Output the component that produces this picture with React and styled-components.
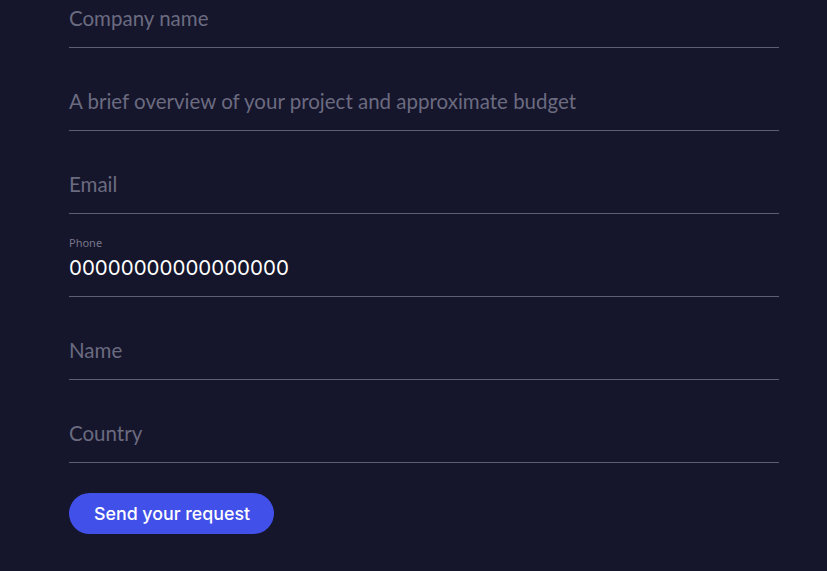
import React from "react";
import styled, { createGlobalStyle } from "styled-components";

const Global = createGlobalStyle`
  html, body { margin: 0; padding: 0; background: #15152b; }
  body { overflow: hidden; }
  * { box-sizing: border-box; }
`;

const Page = styled.div`
  width: 827px;
  height: 571px;
  background: #15152b;
  overflow: hidden;
`;

const Form = styled.form`
  display: flex;
  flex-direction: column;
  width: 710px;
  margin: -35px 0 0 69px;
`;

const Field = styled.div`
  display: flex;
  flex-direction: column;
  justify-content: flex-end;
  height: 83px;
  border-bottom: 1px solid #5e5e74;
  padding-bottom: 12px;
`;

const Label = styled.label`
  font-family: "Noto Sans", sans-serif;
  font-size: 11px;
  line-height: 14px;
  color: #77778a;
`;

const Input = styled.input`
  height: 34px;
  border: none;
  outline: none;
  background: transparent;
  padding: 0;
  color: #ffffff;
  font-family: ${(p) => (p.$filled ? '"Inter", sans-serif' : '"Lato", sans-serif')};
  font-size: 20.5px;
  &::placeholder {
    color: #6b6b80;
    font-family: "Lato", sans-serif;
  }
`;

const Button = styled.button`
  align-self: flex-start;
  margin-top: 30px;
  height: 41px;
  padding: 0 24px 0 25px;
  border: none;
  border-radius: 21px;
  background: #4150e8;
  color: #ffffff;
  font-family: "Inter", sans-serif;
  font-weight: 500;
  font-size: 17.8px;
  cursor: pointer;
`;

const fields = [
  { name: "company", placeholder: "Company name" },
  { name: "overview", placeholder: "A brief overview of your project and approximate budget" },
  { name: "email", placeholder: "Email" },
  { name: "phone", label: "Phone", value: "00000000000000000" },
  { name: "name", placeholder: "Name" },
  { name: "country", placeholder: "Country" },
];

export default function App() {
  return (
    <Page>
      <Global />
      <Form onSubmit={(e) => e.preventDefault()}>
        {fields.map((f) => (
          <Field key={f.name}>
            {f.label && <Label htmlFor={f.name}>{f.label}</Label>}
            <Input
              id={f.name}
              placeholder={f.placeholder}
              defaultValue={f.value}
              $filled={!!f.value}
            />
          </Field>
        ))}
        <Button type="submit">Send your request</Button>
      </Form>
    </Page>
  );
}
